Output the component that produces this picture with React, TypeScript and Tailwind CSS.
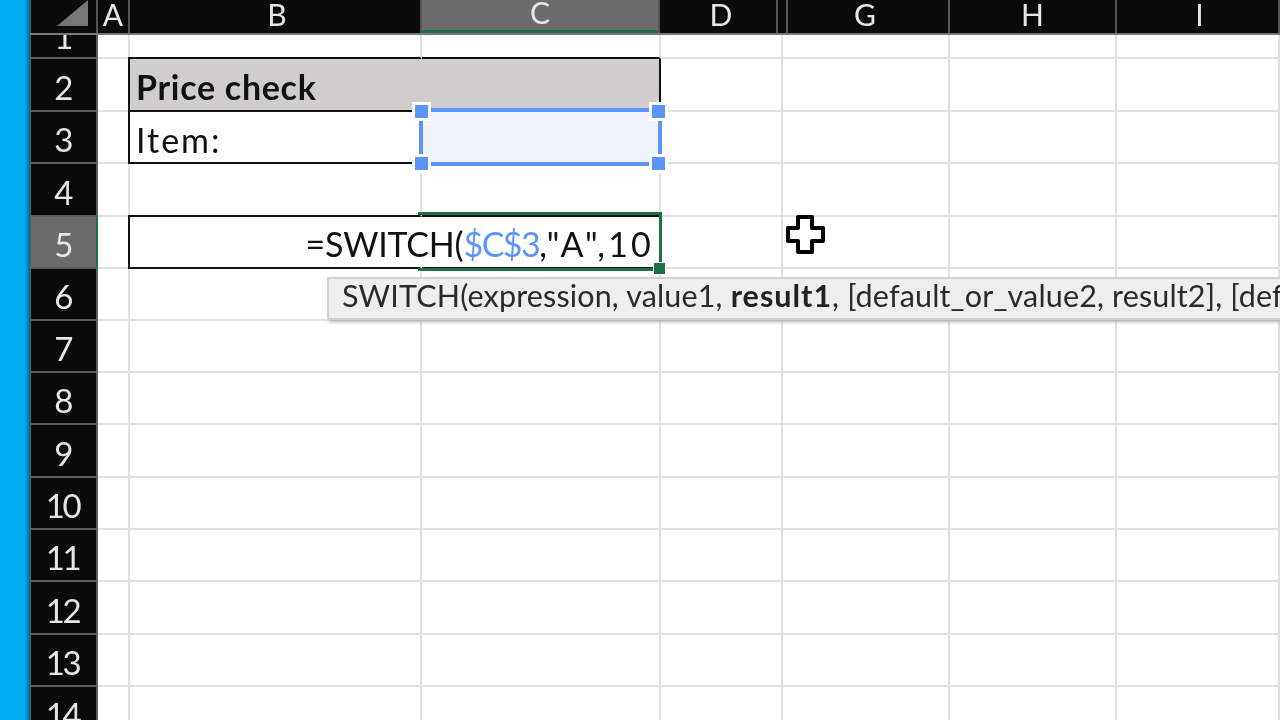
const font = { fontFamily: '"Lato", "Open Sans", sans-serif' };

const headerCols = [
  { label: "A", w: "w-[32px]", extra: "" },
  { label: "B", w: "w-[292px]", extra: "pl-[4px]" },
  { label: "C", w: "w-[238px]", extra: "border-b-[3px] border-b-[#1f7145] bg-[#6b6b6b]" },
  { label: "D", w: "w-[118px]", extra: "pl-[6px]" },
  { label: "", w: "w-[10px]", extra: "" },
  { label: "G", w: "w-[162px]", extra: "pr-[6px]" },
  { label: "H", w: "w-[167px]", extra: "" },
  { label: "I", w: "w-[163px]", extra: "pl-[4px]" },
];

const rows = [
  { n: 1, h: "h-[24px]" },
  { n: 2, h: "h-[53px]" },
  { n: 3, h: "h-[52px]" },
  { n: 4, h: "h-[53px]" },
  { n: 5, h: "h-[52px]", active: true },
  { n: 6, h: "h-[52px]" },
  { n: 7, h: "h-[52px]" },
  { n: 8, h: "h-[52px]" },
  { n: 9, h: "h-[53px]" },
  { n: 10, h: "h-[52px]" },
  { n: 11, h: "h-[52px]" },
  { n: 12, h: "h-[53px]" },
  { n: 13, h: "h-[52px]" },
  { n: 14, h: "h-[52px]" },
];

const grid = "border-r-2 border-b-2 border-[#e1e1e1]";

function Row({ n, h, active }: { n: number; h: string; active?: boolean }) {
  const blackBottom = n <= 5;
  const blackLeft = n === 2 || n === 3 || n === 5;
  return (
    <div className={`flex shrink-0 ${h}`}>
      <div
        className={`relative flex w-[68px] shrink-0 justify-center overflow-hidden border-b-2 border-l border-r-2 border-[#5c5c5c] pr-[2px] text-[33px] tracking-[-2.5px] text-[#e6e6e6] ${
          active ? "border-r-[#1f7145] bg-[#6b6b6b]" : "bg-[#0a0a0a]"
        } ${n === 1 ? "items-end pb-[1px] leading-[40px]" : "items-center pt-[6px]"}`}
      >
        {n}
      </div>
      <div
        className={`w-[32px] shrink-0 border-b-2 border-r-2 border-b-[#e1e1e1] ${
          blackLeft ? "border-r-[#111]" : "border-r-[#e1e1e1]"
        }`}
      />
      <div
        className={`relative flex w-[292px] shrink-0 items-center border-b-2 border-r-2 pl-[6px] text-[34px] text-[#111] ${
          blackBottom
            ? "border-b-[#111] after:absolute after:bottom-[-2px] after:left-[-2px] after:h-[2px] after:w-[2px] after:bg-[#111]"
            : "border-b-[#e1e1e1]"
        } ${n === 2 ? "border-r-transparent bg-[#cfcdcd] pt-[3px] font-bold tracking-[0.7px]" : "border-r-[#e1e1e1] pt-[4px] tracking-[2px]"} ${
          n === 5 ? "border-r-transparent" : ""
        }`}
      >
        {n === 2 ? "Price check" : n === 3 ? "Item:" : ""}
      </div>
      <div
        className={`w-[239px] shrink-0 border-b-2 border-r-2 ${blackBottom ? "border-b-[#111]" : "border-b-[#e1e1e1]"} ${
          blackLeft ? "border-r-[#111]" : "border-r-[#e1e1e1]"
        } ${n === 2 ? "bg-[#cfcdcd]" : ""}`}
      />
      <div className={`w-[122px] shrink-0 ${grid}`} />
      <div className={`w-[167px] shrink-0 ${grid}`} />
      <div className={`w-[167px] shrink-0 ${grid}`} />
      <div className={`flex-1 ${grid}`} />
    </div>
  );
}

export default function App() {
  return (
    <div className="relative flex h-[720px] w-[1280px] overflow-hidden bg-white blur-[0.5px]" style={font}>
      <div className="h-full w-[30px] shrink-0 bg-gradient-to-r from-[#00adf3] from-[82%] to-[#00689a]" />
      <div className="relative min-w-0 flex-1">
        <div className="flex h-[35px] shrink-0 border-b-2 border-[#777] bg-[#0a0a0a] text-[30px] text-[#e6e6e6]">
          <div className="relative w-[68px] shrink-0 border-l border-r-2 border-[#555]">
            <svg className="absolute left-[26px] top-0" width="32" height="26" viewBox="0 0 32 26">
              <path d="M31 0V26H0Z" fill="#777" />
            </svg>
          </div>
          {headerCols.map((col, i) => (
            <div
              key={i}
              className={`flex shrink-0 items-center justify-center overflow-hidden border-r-2 border-[#555] leading-[26px] ${col.w} ${col.extra}`}
            >
              <span className="-translate-y-[3px]">{col.label}</span>
            </div>
          ))}
        </div>
        {rows.map((r) => (
          <Row key={r.n} {...r} />
        ))}

        {/* Range reference highlight on C3 */}
        <div className="absolute left-[389px] top-[108px] h-[58px] w-[243px] border-4 border-[#5b95f9] bg-[#eff4ff]" />
        {[
          "left-[385px] top-[105px]",
          "left-[622px] top-[105px]",
          "left-[385px] top-[157px]",
          "left-[622px] top-[157px]",
        ].map((pos) => (
          <div key={pos} className={`absolute h-[13px] w-[13px] bg-[#5b95f9] outline-[3px] outline-solid outline-white ${pos}`} />
        ))}

        {/* Active cell */}
        <div className="absolute left-[388px] top-[212px] h-[59px] w-[244px] border-b-[3px] border-r-[3px] border-t-[3px] border-[#1f7145]" />
        <div className="absolute left-[624px] top-[263px] h-[11px] w-[11px] bg-[#1f7145] outline outline-1 outline-white" />
        <div className="absolute right-[626px] top-[224px] whitespace-nowrap text-[34px] leading-[40px] text-[#111]">
          <span className="tracking-[-0.2px]">=SWITCH(</span>
          <span className="tracking-[-1.5px] text-[#5b95f9]">$C$3</span>
          <span className="tracking-[3.2px]">,"A",10</span>
        </div>

        {/* Function tooltip */}
        <div className="absolute left-[297px] top-[277px] flex h-[43px] w-[960px] items-center overflow-hidden whitespace-nowrap border-2 border-[#d2d2d2] bg-[#eeeeee] pb-[6px] pl-[13px] text-[30.5px] tracking-[0.15px] text-[#2a2a2a] shadow-[2px_2px_3px_#b0b0b0]">
          <span>
            SWITCH(expression, value1,&nbsp;<b className="tracking-[1px] text-[#222]">result1</b>, [default_or_value2, result2], [default_or_value3, result3],...)
          </span>
        </div>

        {/* Mouse cursor */}
        <svg className="absolute left-[755px] top-[214px]" width="42" height="41" viewBox="0 0 42 41">
          <path
            d="M13 3H27V14H38V27H27V38H13V27H3V14H13Z"
            fill="#fff"
            stroke="#000"
            strokeWidth="4"
            strokeLinejoin="round"
          />
        </svg>
      </div>
    </div>
  );
}
